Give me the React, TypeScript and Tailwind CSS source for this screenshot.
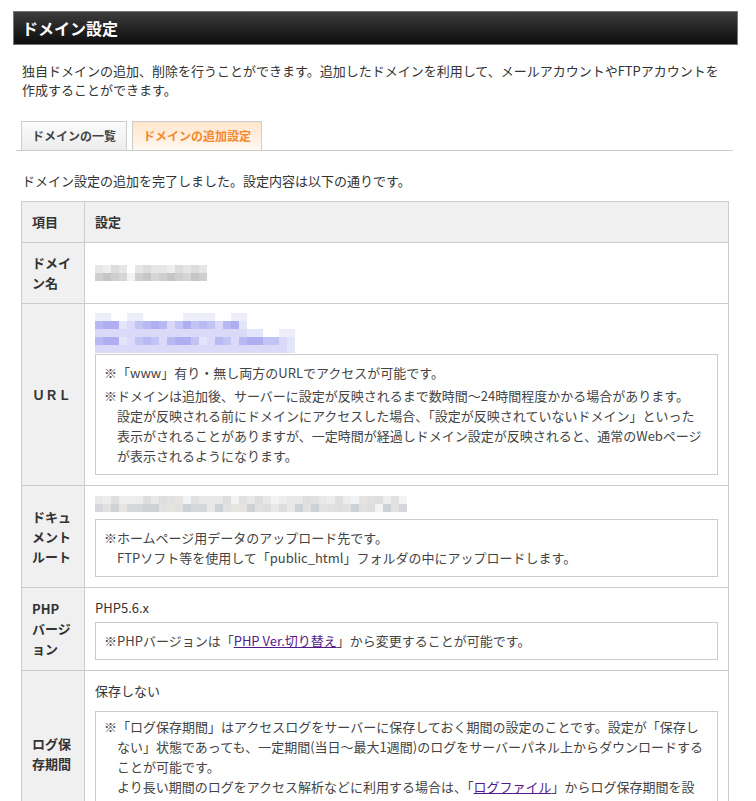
import React from 'react';

type Palette = Record<string, string>;

// pixelated (blurred) placeholder text
function Mosaic({ rows, palette, cell = 8 }: { rows: string[]; palette: Palette; cell?: number }) {
  const width = rows[0].length * cell;
  return (
    <svg width={width} height={rows.length * cell} className="block">
      {rows.flatMap((row, y) =>
        row.split('').map((c, x) =>
          c === '.' ? null : (
            <rect key={`${x}-${y}`} x={x * cell} y={y * cell} width={cell} height={cell} fill={palette[c]} />
          )
        )
      )}
    </svg>
  );
}

const grayPalette: Palette = {
  a: '#e6e6e6',
  b: '#dcdcdc',
  c: '#eeeeee',
  d: '#cfcfcf',
  e: '#c6c6c6',
  f: '#f3f3f3',
  g: '#d6d6d6',
};

const docPalette: Palette = {
  a: '#e8e8e8',
  b: '#ededed',
  c: '#dedede',
  d: '#f2f3f5',
  e: '#d5d7da',
  f: '#e1e1e1',
  g: '#cfd2d4',
  h: '#e6e4e0',
};

const urlPalette: Palette = {
  f: '#eeeefb',
  l: '#dadaf8',
  m: '#c2c4f4',
  b: '#aeaef0',
  p: '#b8b8f2',
  s: '#e2e6fa',
};

function Note({ children, className = '' }: { children: React.ReactNode; className?: string }) {
  return (
    <div className={`border border-[#ccc] px-[8px] pb-[8px] text-[13px] leading-[20px] text-[#444] ${className}`}>
      {children}
    </div>
  );
}

function Para({ children, className = '' }: { children: React.ReactNode; className?: string }) {
  return <p className={`whitespace-nowrap pl-[13px] indent-[-13px] ${className}`}>{children}</p>;
}

function Row({ label, children, header = false }: { label: React.ReactNode; children: React.ReactNode; header?: boolean }) {
  return (
    <div className={`flex border-[#ccc] ${header ? '' : 'border-t'}`}>
      <div className="flex w-[63px] shrink-0 items-center border-r border-[#ccc] bg-[#f0f0f0] px-[10px] py-[10px] text-[13px] font-bold leading-[20px] text-[#333]">
        <div>{label}</div>
      </div>
      <div className={`flex min-w-0 flex-1 flex-col justify-center px-[10px] py-[10px] text-[13px] leading-[20px] text-[#333] ${header ? 'bg-[#f0f0f0] font-bold' : ''}`}>
        {children}
      </div>
    </div>
  );
}

export default function App() {
  return (
    <div className="min-h-screen bg-white font-['Noto_Sans_CJK_JP',sans-serif]">
      <div className="pt-[11px] pl-[13px] pr-[18px] pb-[40px]">
        {/* Title bar */}
        <h1 className="flex h-[34px] items-center border border-[#777] bg-gradient-to-b from-[#3d3d3d] to-[#0e0e0e] pl-[8px] text-[16px] font-bold text-white">
          ドメイン設定
        </h1>

        <div className="px-[8px]">
          <p className="mt-[16px] pl-[1px] text-[13px] leading-[19px] text-[#333]">
            独自ドメインの追加、削除を行うことができます。追加したドメインを利用して、メールアカウントやFTPアカウントを
            <br />
            作成することができます。
          </p>

          {/* Tabs */}
          <div className="mt-[22px] -ml-[5px] -mr-[3px] flex gap-[5px] border-b border-[#ccc] pl-[5px]">
            <div className="flex h-[29px] items-center border border-b-0 border-[#ccc] bg-gradient-to-b from-[#fbfbfb] to-[#ececec] px-[10px] text-[12px] font-bold text-[#444]">
              ドメインの一覧
            </div>
            <div className="flex h-[29px] items-center border border-b-0 border-[#ccc] bg-gradient-to-b from-[#ffe5cb] to-[#fff8f1] px-[10px] text-[12px] font-bold text-[#f28a2e]">
              ドメインの追加設定
            </div>
          </div>

          <p className="mt-[20px] pl-[1px] text-[13px] leading-[20px] text-[#333]">
            ドメイン設定の追加を完了しました。設定内容は以下の通りです。
          </p>

          {/* Result table */}
          <div className="mt-[10px] w-[708px] border border-[#ccc]">
            <Row label="項目" header>
              設定
            </Row>

            <Row label="ドメイン名">
              <div className="flex h-[40px] items-center">
                <Mosaic palette={grayPalette} rows={['acba.abaacbaba', 'dedgfdegdedged']} />
              </div>
            </Row>

            <Row label="ＵＲＬ">
              <div className="-mt-[1px] h-[40px]">
                <Mosaic
                  palette={urlPalette}
                  rows={[
                    'ff..ff.....ffff..ff......',
                    'pbbslmpbplmbmpmlpbs......',
                    'lllllllllllllllllllss..ff',
                    'pbbslmpmlpbbmslpmlpbbmmls',
                    'lllllllllllllllllllllllls',
                  ]}
                />
              </div>
              <Note className="mt-[1px] pt-[8px]">
                <Para>※「www」有り・無し両方のURLでアクセスが可能です。</Para>
                <Para className="mt-[3px]">
                  ※ドメインは追加後、サーバーに設定が反映されるまで数時間～24時間程度かかる場合があります。
                  <br />
                  設定が反映される前にドメインにアクセスした場合、「設定が反映されていないドメイン」といった
                  <br />
                  表示がされることがありますが、一定時間が経過しドメイン設定が反映されると、通常のWebページ
                  <br />
                  が表示されるようになります。
                </Para>
              </Note>
            </Row>

            <Row label="ドキュメントルート">
              <div className="h-[20px]">
                <Mosaic
                  palette={docPalette}
                  rows={[
                    'abcbbbcacfhdfaaacdfacadbaacfabcbdhfcbfd',
                    'efgheeggfhfgeeagfhhgfcacagfgffcfgfcdgfe',
                  ]}
                />
              </div>
              <Note className="mt-[3px] pt-[8px]">
                <Para>
                  ※ホームページ用データのアップロード先です。
                  <br />
                  FTPソフト等を使用して「public_html」フォルダの中にアップロードします。
                </Para>
              </Note>
            </Row>

            <Row
              label={
                <>
                  PHP
                  <br />
                  バージョン
                </>
              }
            >
              <div>PHP5.6.x</div>
              <Note className="mt-[4px] pt-[8px]">
                <Para>
                  ※PHPバージョンは「
                  <a href="#" className="text-[#551a8b] underline">
                    PHP Ver.切り替え
                  </a>
                  」から変更することが可能です。
                </Para>
              </Note>
            </Row>

            <Row label="ログ保存期間">
              <div>保存しない</div>
              <Note className="mt-[10px] pt-[5px]">
                <Para>
                  ※「ログ保存期間」はアクセスログをサーバーに保存しておく期間の設定のことです。設定が「保存し
                  <br />
                  ない」状態であっても、一定期間(当日～最大1週間)のログをサーバーパネル上からダウンロードする
                  <br />
                  ことが可能です。
                  <br />
                  より長い期間のログをアクセス解析などに利用する場合は、「
                  <a href="#" className="text-[#551a8b] underline">
                    ログファイル
                  </a>
                  」からログ保存期間を設
                </Para>
                <div className="h-[20px]" />
              </Note>
            </Row>
          </div>
        </div>
      </div>
    </div>
  );
}
